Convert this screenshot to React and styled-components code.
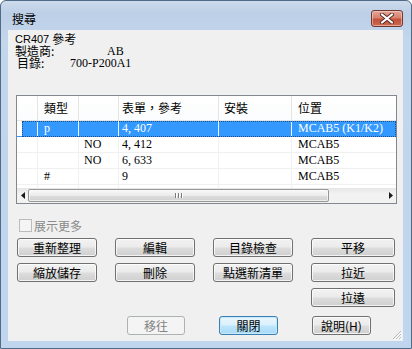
import styled, { createGlobalStyle, css } from "styled-components";

const CJK = `"Noto Sans CJK TC", "Liberation Sans", sans-serif`;
const SERIF = `"Liberation Serif", "Noto Sans CJK TC", serif`;

const GlobalStyle = createGlobalStyle`
  html, body {
    margin: 0;
    padding: 0;
    background: #ffffff;
  }
  body {
    font-family: ${CJK};
    font-size: 12px;
    line-height: 12px;
  }
`;

const Window = styled.div`
  box-sizing: border-box;
  width: 412px;
  height: 349px;
  display: flex;
  flex-direction: column;
  border: 1px solid #4f6b88;
  border-radius: 6px 6px 0 0;
  background: linear-gradient(#cddcec 0px, #bccfe6 12px, #c2d6ec 40px, #bfd6ee 100%);
  overflow: hidden;
`;

const TitleBar = styled.div`
  height: 29px;
  flex: none;
  display: flex;
  align-items: flex-start;
  justify-content: space-between;
  box-sizing: border-box;
  padding: 9px 8px 0 11px;
`;

const Title = styled.span`
  font-family: ${CJK};
  font-size: 12px;
  line-height: 17px;
  color: #000;
`;

const CloseButton = styled.div`
  box-sizing: border-box;
  width: 32px;
  height: 17px;
  border: 1px solid #6a3a33;
  border-radius: 3px;
  background: linear-gradient(#e4a597 0%, #d8826f 45%, #c4503a 55%, #cb6a52 100%);
  box-shadow: inset 0 0 0 1px rgba(255, 220, 210, 0.5);
  display: flex;
  align-items: center;
  justify-content: center;
`;

const Client = styled.div`
  flex: 1;
  position: relative;
  margin: 0 8px 7px 7px;
  background: #f0f0f0;
  padding: 3px 7px 0 7px;
  display: flex;
  flex-direction: column;
`;

const Info = styled.div`
  display: flex;
  flex-direction: column;
`;

const InfoLine = styled.div`
  display: flex;
  height: 12px;
  line-height: 12px;
  white-space: pre;
  color: #000;
`;

const Label = styled.span`
  font-family: ${CJK};
  font-size: 12px;
  width: ${(p) => p.$w}px;
  margin-left: ${(p) => p.$indent || 0}px;
`;

const RefCode = styled.span`
  font-family: "Liberation Sans", sans-serif;
  font-size: 11px;
`;

const Value = styled.span`
  font-family: ${SERIF};
  font-size: 12px;
`;

const List = styled.div`
  box-sizing: border-box;
  margin: 26px 0 0 1px;
  width: 381px;
  height: 109px;
  border: 1px solid #828790;
  background: #ffffff;
  display: flex;
  flex-direction: column;
  overflow: hidden;
`;

const GRID = "21px 41px 40px 100px 73px 1fr";

const HeaderRow = styled.div`
  display: grid;
  grid-template-columns: ${GRID};
  height: 25px;
  box-sizing: border-box;
  border-bottom: 1px solid #e5e5e5;
  background: linear-gradient(#ffffff, #fbfcfd);
  flex: none;
`;

const HeaderCell = styled.div`
  border-right: ${(p) => (p.$last ? "none" : "1px solid #e5e5e5")};
  padding-left: ${(p) => p.$pad}px;
  font-family: ${CJK};
  font-size: 12px;
  line-height: 24px;
  color: #000;
  white-space: nowrap;
`;

const Body = styled.div`
  flex: 1;
  overflow: hidden;
`;

const Row = styled.div`
  position: relative;
  display: grid;
  grid-template-columns: ${GRID};
  height: 16px;
  box-sizing: border-box;
  border-bottom: 1px solid #f0f0f0;
  color: #000;
  ${(p) =>
    p.$selected &&
    css`
      color: #ffffff;
      border-bottom-color: #3399ff;
      background: linear-gradient(to right, transparent 5px, #3399ff 5px);
      &::after {
        content: "";
        position: absolute;
        left: 5px;
        right: 0;
        top: 0;
        bottom: -1px;
        border: 1px dotted #1c4f86;
      }
    `}
`;

const Cell = styled.div`
  border-right: ${(p) =>
    p.$last ? "none" : p.$selected ? "1px solid #e8f2ff" : "1px solid #f0f0f0"};
  padding-left: ${(p) => p.$pad}px;
  font-family: ${SERIF};
  font-size: 12px;
  line-height: 15px;
  white-space: nowrap;
  overflow: hidden;
`;

const HScroll = styled.div`
  height: 15px;
  flex: none;
  display: flex;
  align-items: center;
  background: linear-gradient(#e6e6e6, #f2f2f2 40%, #f2f2f2);
`;

const ArrowBox = styled.div`
  width: 11px;
  height: 15px;
  display: flex;
  align-items: center;
  justify-content: center;
  flex: none;
`;

const Thumb = styled.div`
  box-sizing: border-box;
  width: 301px;
  height: 13px;
  border: 1px solid #979797;
  border-radius: 2px;
  background: linear-gradient(#f7f7f7, #ececec 50%, #dcdcdc 51%, #d2d2d2);
  box-shadow: inset 0 0 0 1px rgba(255, 255, 255, 0.6);
  display: flex;
  align-items: center;
  justify-content: center;
  gap: 1px;
  flex: none;
`;

const Grip = styled.span`
  width: 1px;
  height: 5px;
  background: #7a7a7a;
  box-shadow: 1px 0 0 #ffffff;
  margin-right: 1px;
`;

const Track = styled.div`
  flex: 1;
`;

const CheckRow = styled.div`
  display: flex;
  align-items: center;
  margin: 15px 0 0 4px;
  height: 13px;
  gap: 2px;
`;

const CheckBox = styled.span`
  box-sizing: border-box;
  width: 13px;
  height: 13px;
  border: 1px solid #bcbcbc;
  background: #f4f4f4;
`;

const CheckLabel = styled.span`
  font-family: ${CJK};
  font-size: 12px;
  line-height: 13px;
  color: #8a8a8a;
`;

const ButtonGrid = styled.div`
  display: grid;
  grid-template-columns: 80px 80px 80px 84px;
  grid-template-rows: repeat(3, 19px);
  column-gap: 18px;
  row-gap: 6px;
  margin: 6px 0 0 2px;
`;

const Button = styled.button`
  box-sizing: border-box;
  width: ${(p) => (p.$w ? `${p.$w}px` : "100%")};
  height: 19px;
  padding: 0;
  margin: 0;
  grid-column: ${(p) => p.$col || "auto"};
  border: 1px solid #707070;
  border-radius: 3px;
  background: linear-gradient(#f2f2f2 0%, #ebebeb 48%, #dddddd 52%, #cfcfcf 100%);
  box-shadow: inset 0 0 0 1px rgba(255, 255, 255, 0.75);
  font-family: ${CJK};
  font-size: 12px;
  line-height: 16px;
  color: #000;
  ${(p) =>
    p.$default &&
    css`
      border-color: #3c7fb1;
      background: linear-gradient(#eaf6fd 0%, #d9f0fc 48%, #bee6fd 52%, #a7d9f5 100%);
      box-shadow: inset 0 0 0 1px #c6e8fb;
    `}
  &:disabled {
    border-color: #adb2b5;
    background: #f4f4f4;
    color: #838383;
    box-shadow: none;
  }
`;

const BottomRow = styled.div`
  display: flex;
  gap: 34px;
  margin: 9px 0 0 112px;
`;

const ResizeGrip = styled.svg`
  position: absolute;
  right: 1px;
  bottom: 1px;
`;

const columns = [
  { key: "state", pad: 0 },
  { key: "type", pad: 5, title: "類型" },
  { key: "flag", pad: 4 },
  { key: "ref", pad: 2, title: "表單，參考" },
  { key: "install", pad: 4, title: "安裝" },
  { key: "loc", pad: 5, title: "位置" },
];

const rows = [
  { type: "p", flag: "", ref: "4, 407", install: "", loc: "MCAB5 (K1/K2)", selected: true },
  { type: "", flag: "NO", ref: "4, 412", install: "", loc: "MCAB5" },
  { type: "", flag: "NO", ref: "6, 633", install: "", loc: "MCAB5" },
  { type: "#", flag: "", ref: "9", install: "", loc: "MCAB5" },
  { type: "", flag: "", ref: "", install: "", loc: "" },
];

function CloseX() {
  return (
    <svg width="14" height="11" viewBox="0 0 14 11">
      <path d="M2 1.5 L12 9.5 M12 1.5 L2 9.5" stroke="#5a2c25" strokeWidth="4" strokeLinecap="round" />
      <path d="M2 1.5 L12 9.5 M12 1.5 L2 9.5" stroke="#ffffff" strokeWidth="2.2" strokeLinecap="round" />
    </svg>
  );
}

function Arrow({ dir }) {
  return (
    <svg width="4" height="7" viewBox="0 0 4 7">
      {dir === "left" ? (
        <path d="M4 0 L0 3.5 L4 7 Z" fill="#1a1a1a" />
      ) : (
        <path d="M0 0 L4 3.5 L0 7 Z" fill="#1a1a1a" />
      )}
    </svg>
  );
}

export default function App() {
  return (
    <>
      <GlobalStyle />
      <Window>
        <TitleBar>
          <Title>搜尋</Title>
          <CloseButton>
            <CloseX />
          </CloseButton>
        </TitleBar>
        <Client>
          <Info>
            <InfoLine>
              <RefCode>CR407 </RefCode>
              <Label>參考</Label>
            </InfoLine>
            <InfoLine>
              <Label $w={92}>製造商:</Label>
              <Value>AB</Value>
            </InfoLine>
            <InfoLine>
              <Label $w={53} $indent={2}>目錄:</Label>
              <Value>700-P200A1</Value>
            </InfoLine>
          </Info>

          <List>
            <HeaderRow>
              {columns.map((c, i) => (
                <HeaderCell key={c.key} $pad={c.pad + 1} $last={i === columns.length - 1}>
                  {c.title || ""}
                </HeaderCell>
              ))}
            </HeaderRow>
            <Body>
              {rows.map((r, ri) => (
                <Row key={ri} $selected={r.selected}>
                  {columns.map((c, i) => (
                    <Cell
                      key={c.key}
                      $pad={c.pad + 1}
                      $selected={r.selected && i > 0}
                      $last={i === columns.length - 1}
                    >
                      {r[c.key] || ""}
                    </Cell>
                  ))}
                </Row>
              ))}
            </Body>
            <HScroll>
              <ArrowBox>
                <Arrow dir="left" />
              </ArrowBox>
              <Thumb>
                <Grip />
                <Grip />
                <Grip />
              </Thumb>
              <Track />
              <ArrowBox>
                <Arrow dir="right" />
              </ArrowBox>
            </HScroll>
          </List>

          <CheckRow>
            <CheckBox />
            <CheckLabel>展示更多</CheckLabel>
          </CheckRow>

          <ButtonGrid>
            <Button>重新整理</Button>
            <Button>編輯</Button>
            <Button>目錄檢查</Button>
            <Button>平移</Button>
            <Button>縮放儲存</Button>
            <Button>刪除</Button>
            <Button>點選新清單</Button>
            <Button>拉近</Button>
            <Button $col={4}>拉遠</Button>
          </ButtonGrid>

          <BottomRow>
            <Button $w={58} disabled>移往</Button>
            <Button $w={59} $default>關閉</Button>
            <Button $w={59}>說明(H)</Button>
          </BottomRow>

          <ResizeGrip width="11" height="11" viewBox="0 0 11 11">
            <path d="M10 2 L2 10 M10 5 L5 10 M10 8 L8 10" stroke="#b8b8b8" strokeWidth="1" />
            <path d="M11 3 L3 11 M11 6 L6 11 M11 9 L9 11" stroke="#ffffff" strokeWidth="1" />
          </ResizeGrip>
        </Client>
      </Window>
    </>
  );
}
